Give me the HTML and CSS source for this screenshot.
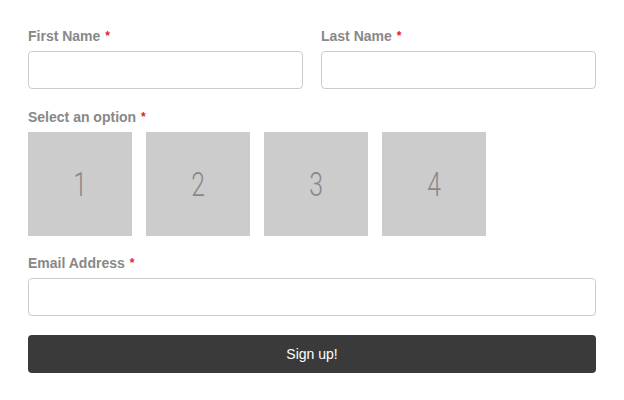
FILE: index.html
```html
<!DOCTYPE html>
<html>
<head>
	<title>Sign up</title>
	<link rel="stylesheet" href="styles.css">
</head>
<body>
	<form class="signup">
		<div class="row">
			<div class="field">
				<label>First Name <span class="req">*</span></label>
				<input type="text" class="text-input">
			</div>
			<div class="field">
				<label>Last Name <span class="req">*</span></label>
				<input type="text" class="text-input">
			</div>
		</div>

		<div class="field options-field">
			<label>Select an option <span class="req">*</span></label>
			<div class="options">
				<div class="option"><span>1</span></div>
				<div class="option"><span>2</span></div>
				<div class="option"><span>3</span></div>
				<div class="option"><span>4</span></div>
			</div>
		</div>

		<div class="field email-field">
			<label>Email Address <span class="req">*</span></label>
			<input type="email" class="text-input">
		</div>

		<button type="button" class="submit">Sign up!</button>
	</form>
</body>
</html>
```

FILE: styles.css
```css
body {
	margin: 0;
	font-family: "Liberation Sans", Arial, sans-serif;
	background: #fff;
}
.signup {
	width: 568px;
	padding: 26px 28px 0 28px;
}
.row {
	display: flex;
	gap: 18px;
}
.row .field {
	flex: 1;
}
.field {
	display: flex;
	flex-direction: column;
	margin-bottom: 18px;
}
.options-field {
	margin-bottom: 17px;
}
.email-field {
	margin-bottom: 19px;
}
label {
	display: block;
	font-size: 14px;
	font-weight: bold;
	line-height: 20px;
	color: #888;
	margin-bottom: 5px;
}
.req {
	display: inline-block;
	margin-left: 1px;
	color: #e8202a;
	font-size: 12px;
	vertical-align: top;
	line-height: 20px;
}
.text-input {
	box-sizing: border-box;
	height: 38px;
	width: 100%;
	border: 1px solid #ccc;
	border-radius: 4px;
	padding: 6px 10px;
	font-size: 14px;
	font-family: inherit;
}
.options {
	display: flex;
	gap: 14px;
}
.option {
	width: 104px;
	height: 104px;
	background: #ccc;
	color: #888;
	display: flex;
	align-items: center;
	justify-content: center;
	font-family: Roboto, sans-serif;
	font-weight: 300;
	font-size: 33px;
}
.option span {
	display: inline-block;
	transform: scaleX(0.75);
}
.submit {
	display: block;
	width: 100%;
	height: 38px;
	border: none;
	border-radius: 4px;
	background: #3a3a3a;
	color: #fff;
	font-family: inherit;
	font-size: 14px;
	cursor: pointer;
}
```
